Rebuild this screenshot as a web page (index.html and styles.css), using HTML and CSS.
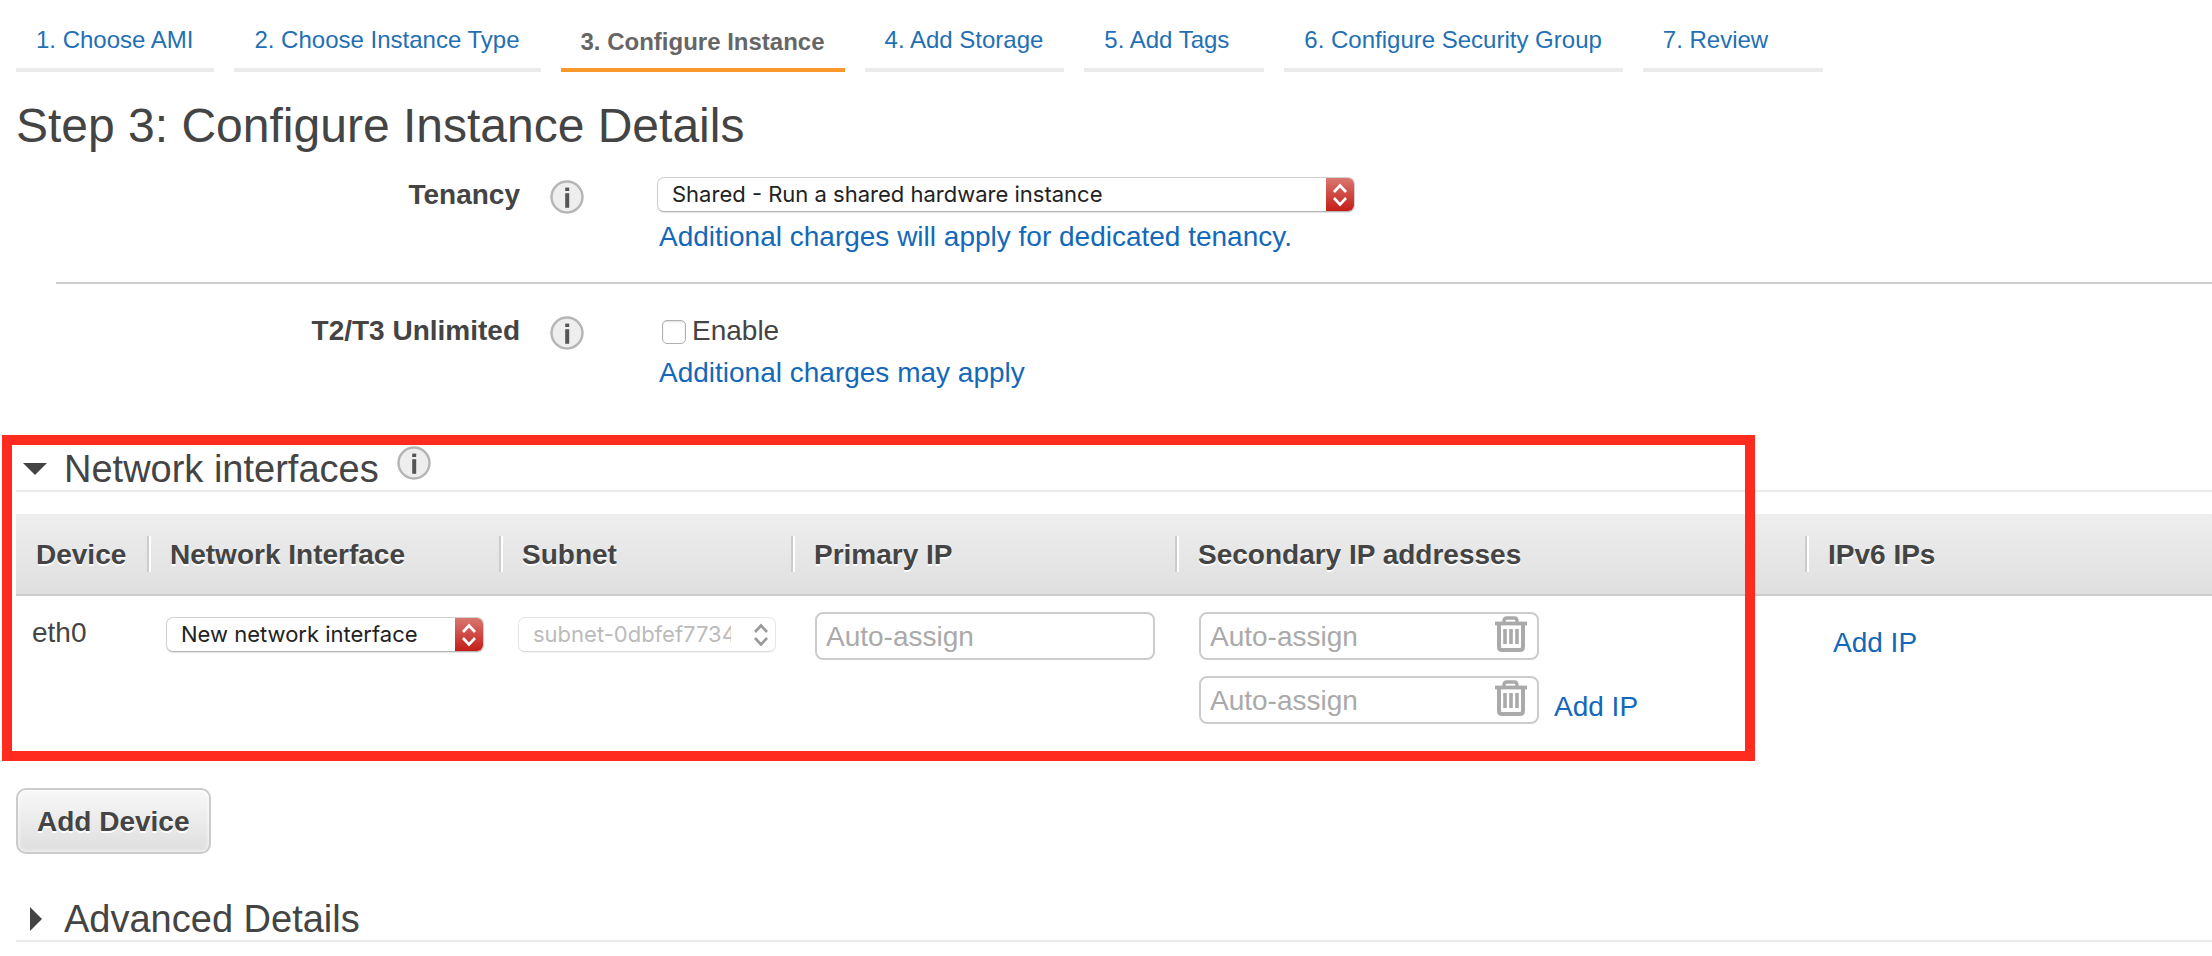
FILE: index.html
```html
<!DOCTYPE html>
<html lang="en">
<head>
<meta charset="utf-8">
<title>Step 3: Configure Instance Details</title>
<link rel="stylesheet" href="styles.css">
</head>
<body>
<svg class="sprite" aria-hidden="true">
  <symbol id="info" viewBox="0 0 34 34">
    <circle cx="17" cy="17" r="15.5" fill="#eee" stroke="#b5b5b5" stroke-width="2.4"/>
    <rect x="15.2" y="7.6" width="4" height="3.4" fill="#555"/>
    <rect x="15.2" y="13.2" width="4" height="14.6" fill="#555"/>
  </symbol>
  <symbol id="trash" viewBox="0 0 32 36">
    <g fill="none" stroke="#aaa">
      <path d="M9 7V5q0-3 3-3h7q3 0 3 3v2" stroke-width="3.4"/>
      <path d="M0 7.5h32" stroke-width="3.8"/>
      <path d="M4 8v23q0 3 3 3h18q3 0 3-3V8" stroke-width="4"/>
      <path d="M10 13v15M16 13v15M22 13v15" stroke-width="3.6"/>
    </g>
  </symbol>
  <symbol id="updown" viewBox="0 0 28 34">
    <path d="M8 14l6-6.5 6 6.5M8 20l6 6.5 6-6.5" fill="none" stroke="currentColor" stroke-width="2.6"/>
  </symbol>
</svg>

<nav class="steps" aria-label="Launch steps">
  <a class="step" href="#ami">1. Choose AMI</a>
  <a class="step" href="#type">2. Choose Instance Type</a>
  <a class="step step-active" href="#configure" aria-current="step">3. Configure Instance</a>
  <a class="step" href="#storage">4. Add Storage</a>
  <a class="step" href="#tags">5. Add Tags</a>
  <a class="step" href="#security">6. Configure Security Group</a>
  <a class="step" href="#review">7. Review</a>
</nav>

<main class="page">
  <h1 class="title">Step 3: Configure Instance Details</h1>

  <form>
    <div class="row">
      <label class="row-label" for="tenancy">Tenancy</label>
      <button class="info" type="button" aria-label="About tenancy"><svg class="info-icon"><use href="#info"/></svg></button>
      <div class="field">
        <div class="field-control">
          <span class="picker picker-wide">
            <select class="picker-select" id="tenancy"><option>Shared - Run a shared hardware instance</option></select>
            <svg class="picker-arrows"><use href="#updown"/></svg>
          </span>
        </div>
        <a class="link" href="#tenancy-pricing">Additional charges will apply for dedicated tenancy.</a>
      </div>
    </div>
    <hr class="divider">
    <div class="row">
      <span class="row-label">T2/T3 Unlimited</span>
      <button class="info" type="button" aria-label="About T2/T3 Unlimited"><svg class="info-icon"><use href="#info"/></svg></button>
      <div class="field">
        <label class="field-control check"><input class="check-box" type="checkbox">Enable</label>
        <a class="link" href="#unlimited-pricing">Additional charges may apply</a>
      </div>
    </div>

    <section class="interfaces">
      <div class="section-head">
        <h2 class="section-title"><button class="toggle" type="button" aria-expanded="true"><svg class="caret" viewBox="0 0 24 24"><path d="M0 6h24L12 18z" fill="#444"/></svg>Network interfaces</button></h2>
        <button class="info" type="button" aria-label="About network interfaces"><svg class="info-icon"><use href="#info"/></svg></button>
      </div>
      <table class="grid">
        <colgroup>
          <col class="col-device"><col class="col-interface"><col class="col-subnet"><col class="col-primary"><col class="col-secondary"><col>
        </colgroup>
        <thead>
          <tr>
            <th><div class="grid-label">Device</div></th>
            <th><div class="grid-label">Network Interface</div></th>
            <th><div class="grid-label">Subnet</div></th>
            <th><div class="grid-label">Primary IP</div></th>
            <th><div class="grid-label">Secondary IP addresses</div></th>
            <th><div class="grid-label">IPv6 IPs</div></th>
          </tr>
        </thead>
        <tbody>
          <tr>
            <td class="cell-device">eth0</td>
            <td class="cell-picker">
              <span class="picker">
                <select class="picker-select" aria-label="Network Interface"><option>New network interface</option></select>
                <svg class="picker-arrows"><use href="#updown"/></svg>
              </span>
            </td>
            <td class="cell-picker">
              <span class="picker picker-disabled">
                <select class="picker-select" aria-label="Subnet" disabled><option>subnet-0dbfef7734</option></select>
                <svg class="picker-arrows"><use href="#updown"/></svg>
              </span>
            </td>
            <td class="cell-ip"><input class="ip" type="text" placeholder="Auto-assign" aria-label="Primary IP"></td>
            <td class="cell-ip">
              <div class="ip-list">
                <div class="ip-box">
                  <input class="ip" type="text" placeholder="Auto-assign" aria-label="Secondary IP address 1">
                  <button class="remove" type="button" aria-label="Remove address 1"><svg class="remove-icon"><use href="#trash"/></svg></button>
                </div>
                <div class="ip-line">
                  <div class="ip-box">
                    <input class="ip" type="text" placeholder="Auto-assign" aria-label="Secondary IP address 2">
                    <button class="remove" type="button" aria-label="Remove address 2"><svg class="remove-icon"><use href="#trash"/></svg></button>
                  </div>
                  <a class="link" href="#add-ip">Add IP</a>
                </div>
              </div>
            </td>
            <td class="cell-ipv6"><a class="link" href="#add-ipv6">Add IP</a></td>
          </tr>
        </tbody>
      </table>
      <div class="highlight"></div>
    </section>

    <button class="add-device" type="button">Add Device</button>

    <section class="section-head">
      <h2 class="section-title"><button class="toggle" type="button" aria-expanded="false"><svg class="caret" viewBox="0 0 24 24"><path d="M7 0v24L19 12z" fill="#444"/></svg>Advanced Details</button></h2>
    </section>
  </form>
</main>
</body>
</html>
```
FILE: styles.css
```css
* {
  box-sizing: border-box;
}

body {
  margin: 0;
  background: #fff;
  color: #444;
  font: 28px/36px "Liberation Sans", Arial, sans-serif;
}

button {
  padding: 0;
  border: 0;
  background: none;
  color: inherit;
  font: inherit;
}

.sprite {
  display: none;
}

svg {
  display: block;
}

.link {
  color: #1468ba;
  text-decoration: none;
}

/* Wizard steps */
.steps {
  display: flex;
  gap: 20px;
  padding-left: 16px;
}

.step {
  min-width: 180px;
  padding: 26px 21px 14px 20px;
  border-bottom: 4px solid #ebebeb;
  color: #1f70b5;
  font-size: 24px;
  line-height: 28px;
  text-decoration: none;
  white-space: nowrap;
}

.step-active {
  padding: 28px 20px 12px;
  border-color: #fb982b;
  color: #666;
  font-weight: bold;
}

.page {
  padding-left: 16px;
}

.title {
  margin: 26px 0 23px;
  font-size: 48px;
  font-weight: normal;
  line-height: 56px;
}

/* Settings rows */
.row {
  display: grid;
  grid-template-columns: 504px 34px 1fr;
  column-gap: 30px;
  align-items: start;
}

.row-label {
  font-weight: bold;
  text-align: right;
}

.info {
  width: 34px;
  height: 34px;
}

.row .info {
  margin-top: 3px;
}

.info-icon {
  width: 34px;
  height: 34px;
}

.field {
  padding-left: 43px;
}

.field-control {
  display: flex;
  align-items: flex-start;
  height: 42px;
}

.field .link {
  display: block;
  padding-left: 2px;
}

.check {
  gap: 6px;
  padding-left: 5px;
}

.check-box {
  width: 24px;
  height: 24px;
  margin: 7px 0 0;
  appearance: none;
  border: 1px solid #b0b0b0;
  border-radius: 5px;
  background: #fff;
  box-shadow: inset 0 1px 2px #ddd;
}

.divider {
  height: 2px;
  margin: 27px 0 29px 40px;
  border: 0;
  background: #ccc;
}

/* Drop-downs */
.picker {
  display: grid;
  grid-template-columns: 1fr 28px;
  width: 318px;
  height: 35px;
  border: 1px solid #d0d0d0;
  border-bottom-color: #b4b4b4;
  border-radius: 7px;
  overflow: hidden;
  box-shadow: 0 1px 1px #e4e4e4;
}

.picker-wide {
  width: 698px;
}

.picker-select {
  grid-area: 1 / 1 / 2 / 3;
  width: 100%;
  padding: 0 44px 2px 14px;
  appearance: none;
  border: 0;
  background: none;
  color: #222;
  font: 22px/30px Inter, sans-serif;
}

.picker-arrows {
  grid-area: 1 / 2;
  width: 28px;
  height: 34px;
  background: linear-gradient(#d97770, #c41a14);
  color: #fff;
  pointer-events: none;
}

.picker-disabled {
  width: 258px;
  border-color: #e6e6e6;
  border-bottom-color: #dadada;
  box-shadow: 0 1px 1px #f3f3f3;
}

.picker-disabled .picker-select {
  color: #bbb;
  opacity: 1;
}

.picker-disabled .picker-arrows {
  background: none;
  color: #999;
}

/* Sections */
.interfaces {
  position: relative;
  margin-top: 44px;
  padding-top: 13px;
  padding-bottom: 37px;
}

.section-head {
  display: flex;
  gap: 18px;
  height: 44px;
  border-bottom: 2px solid #ebebeb;
}

.section-head .info {
  margin-top: -2px;
}

.section-title {
  margin: 0;
  font-size: 38px;
  font-weight: normal;
  line-height: 42px;
}

.toggle {
  display: flex;
  gap: 17px;
  align-items: center;
  padding-left: 7px;
}

.caret {
  width: 24px;
  height: 24px;
}

.highlight {
  position: absolute;
  top: 0;
  bottom: 0;
  left: -14px;
  width: 1753px;
  border: 10px solid #fe2b1e;
  pointer-events: none;
}

/* Interfaces table */
.grid {
  width: 100%;
  margin-top: 22px;
  border-collapse: collapse;
  table-layout: fixed;
}

.grid thead {
  background: linear-gradient(#eee, #dfdfdf);
}

.grid thead tr {
  box-shadow: inset 0 -2px #ccc;
}

.grid th {
  padding: 22px 0 24px;
  text-align: left;
}

.grid td {
  padding: 0;
  vertical-align: top;
}

.col-device {
  width: 131px;
}

.col-interface {
  width: 352px;
}

.col-subnet {
  width: 292px;
}

.col-primary {
  width: 384px;
}

.col-secondary {
  width: 630px;
}

.grid-label {
  height: 36px;
  padding-left: 21px;
  border-left: 2px solid #ccc;
  box-shadow: inset 2px 0 #fff;
  line-height: 38px;
  text-shadow: 0 2px #fff;
}

th:first-child .grid-label {
  padding-left: 20px;
  border: 0;
  box-shadow: none;
}

.grid .cell-device {
  padding: 19px 0 0 16px;
}

.grid .cell-picker {
  padding: 21px 0 0 19px;
}

.grid .cell-ip {
  padding: 16px 0 0 24px;
}

.grid .cell-ipv6 {
  padding: 29px 0 0 28px;
}

.ip {
  display: block;
  width: 340px;
  height: 48px;
  padding: 1px 9px 0;
  border: 2px solid #ccc;
  border-radius: 8px;
  background: #fff;
  color: #444;
  font: inherit;
}

.ip::placeholder {
  color: #aaa;
  opacity: 1;
}

.ip-list {
  display: grid;
  gap: 16px;
}

.ip-box {
  display: grid;
  grid-template-columns: 340px;
}

.ip-box .ip {
  grid-area: 1 / 1;
  padding-right: 48px;
}

.remove {
  grid-area: 1 / 1;
  justify-self: end;
  align-self: start;
  margin: 4px 12px 0 0;
}

.remove-icon {
  width: 32px;
  height: 36px;
}

.ip-line {
  display: flex;
  gap: 15px;
  align-items: flex-end;
}

.ip-line .link {
  line-height: 34px;
}

.add-device {
  display: block;
  height: 66px;
  margin: 27px 0 44px;
  padding: 2px 19px 0;
  border: 2px solid #ccc;
  border-radius: 10px;
  background: linear-gradient(#f8f8f8, #dedede);
  box-shadow: inset 0 0 4px #fff;
  font-weight: bold;
  text-shadow: 0 2px #fff;
}
```
